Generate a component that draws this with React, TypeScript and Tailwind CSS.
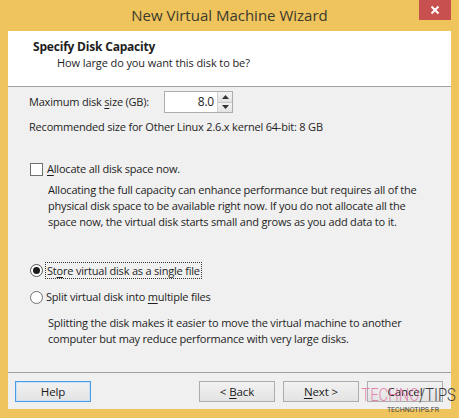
import React from "react";

const U = ({ children }: { children: React.ReactNode }) => (
  <span className="underline underline-offset-2 decoration-1">{children}</span>
);

function Btn({ children, focused }: { children: React.ReactNode; focused?: boolean }) {
  return (
    <div
      className={
        "w-[76px] h-[21px] flex items-center justify-center text-[11.5px] tracking-[-0.1px] text-[#1a1a1a] bg-gradient-to-b from-[#f2f2f2] to-[#e3e3e3] border " +
        (focused ? "border-[#4d9be6] shadow-[inset_0_0_0_1px_#c7e1f8]" : "border-[#adadad]")
      }
    >
      <span className="whitespace-pre">{children}</span>
    </div>
  );
}

export default function App() {
  return (
    <div className="relative w-[459px] h-[418px] bg-[#f0c45c] flex flex-col font-['Open_Sans','Noto_Sans',sans-serif] text-[#1e1e1e] overflow-hidden">
      {/* Title bar */}
      <div className="relative h-[31px] flex items-center justify-center shrink-0">
        <span className="text-[15px] text-[#3a3a2c] mt-[-1px]">New Virtual Machine Wizard</span>
        <div className="absolute right-[8px] top-0 w-[32px] h-[20px] bg-[#c8504e] flex items-center justify-center">
          <svg width="10" height="10" viewBox="0 0 10 10">
            <path d="M1.5 1.5 L8.5 8.5 M8.5 1.5 L1.5 8.5" stroke="#fff" strokeWidth="2" />
          </svg>
        </div>
      </div>

      {/* Client */}
      <div className="mx-[8px] h-[378px] bg-[#f0f0f0] flex flex-col shrink-0">
        {/* Header */}
        <div className="h-[56px] bg-white border-b border-[#a0a0a0] pl-[25px] pt-[8px] shrink-0">
          <div className="text-[12px] font-bold leading-[16px] tracking-[-0.2px]">Specify Disk Capacity</div>
          <div className="text-[11px] leading-[16px] pl-[24px] tracking-[-0.1px]">How large do you want this disk to be?</div>
        </div>

        {/* Body */}
        <div className="flex-1 pl-[21px] text-[11px] tracking-[-0.2px] flex flex-col">
          <div className="mt-[4px] h-[22px] flex items-center">
            <span className="w-[135px]">
              Maximum disk <U>s</U>ize (GB):
            </span>
            <div className="flex h-[22px] border border-[#abadb3] bg-white">
              <div className="w-[52px] flex items-center justify-end pr-[3px] text-[12px]">8.0</div>
              <div className="w-[15px] flex flex-col border-l border-[#d0d0d0]">
                <div className="flex-1 flex items-center justify-center bg-gradient-to-b from-[#f4f4f4] to-[#e2e2e2] border-b border-[#c8c8c8]">
                  <svg width="7" height="4" viewBox="0 0 7 4">
                    <path d="M0 4 L3.5 0 L7 4 Z" fill="#333" />
                  </svg>
                </div>
                <div className="flex-1 flex items-center justify-center bg-gradient-to-b from-[#f4f4f4] to-[#e2e2e2]">
                  <svg width="7" height="4" viewBox="0 0 7 4">
                    <path d="M0 0 L3.5 4 L7 0 Z" fill="#333" />
                  </svg>
                </div>
              </div>
            </div>
          </div>

          <div className="mt-[6px] h-[16px] leading-[16px]">
            Recommended size for Other Linux 2.6.x kernel 64-bit: 8 GB
          </div>

          <div className="mt-[26px] h-[16px] flex items-center">
            <div className="w-[13px] h-[13px] border border-[#707070] bg-white ml-[1px] mr-[4px]" />
            <span>
              <U>A</U>llocate all disk space now.
            </span>
          </div>

          <div className="mt-[5px] pl-[19px] leading-[16px] whitespace-nowrap">
            Allocating the full capacity can enhance performance but requires all of the
            <br />
            physical disk space to be available right now. If you do not allocate all the
            <br />
            space now, the virtual disk starts small and grows as you add data to it.
          </div>

          <div className="mt-[31px] h-[18px] flex items-center">
            <div className="w-[13px] h-[13px] rounded-full border border-[#555] bg-white ml-[1px] mr-[2px] flex items-center justify-center">
              <div className="w-[7px] h-[7px] rounded-full bg-[#1a1a1a]" />
            </div>
            <span className="border border-dotted border-[#333] px-[1px] leading-[15px]">
              St<U>o</U>re virtual disk as a single file
            </span>
          </div>

          <div className="mt-[9px] h-[18px] flex items-center">
            <div className="w-[13px] h-[13px] rounded-full border border-[#707070] bg-white ml-[1px] mr-[3px]" />
            <span>
              Split virtual disk into <U>m</U>ultiple files
            </span>
          </div>

          <div className="mt-[9px] pl-[19px] leading-[16px] whitespace-nowrap">
            Splitting the disk makes it easier to move the virtual machine to another
            <br />
            computer but may reduce performance with very large disks.
          </div>
        </div>

        {/* Footer */}
        <div className="h-[37px] border-t border-[#a0a0a0] flex items-start pt-[8px] px-[7px] shrink-0">
          <Btn focused>Help</Btn>
          <div className="flex-1" />
          <div className="flex gap-[8px] mr-[1px]">
            <Btn>
              {"< "}
              <U>B</U>
              {"ack"}
            </Btn>
            <Btn>
              <U>N</U>
              {"ext >"}
            </Btn>
            <Btn>Cancel</Btn>
          </div>
        </div>
      </div>

      {/* Watermark */}
      <div className="absolute left-[362px] top-[384px] w-[94px] flex flex-col items-center pointer-events-none">
        <div className="text-[19px] leading-[22px] font-['Roboto',sans-serif] font-light whitespace-nowrap scale-x-[0.78] origin-center">
          <span className="text-[#e26a9e]/80">TECHNO</span>
          <span className="text-[#3c3c3c]">/TIPS</span>
        </div>
        <div className="text-[7px] leading-[8px] font-['Roboto',sans-serif] text-[#444] ml-[8px] whitespace-nowrap">TECHNOTIPS.FR</div>
      </div>
    </div>
  );
}
